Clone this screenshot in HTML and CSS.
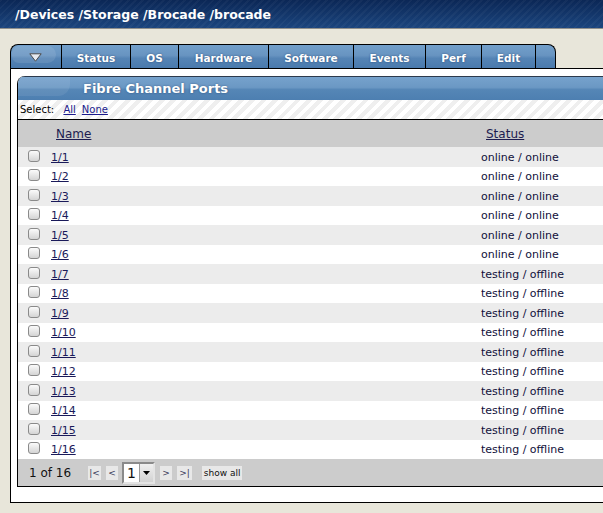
FILE: index.html
```html
<!DOCTYPE html>
<html>
<head>
<meta charset="utf-8">
<link rel="stylesheet" href="styles.css">
</head>
<body>
<div class="topbar"><h1 class="title">/Devices /Storage /Brocade /brocade</h1></div>
<div class="main">
  <div class="tabs">
    <div class="tab tab-menu"><span class="glow"></span><svg class="tri" width="13" height="9" viewBox="0 0 13 9"><polygon points="0.8,0.8 12.2,0.8 6.5,8.2" fill="#e6eaf0" stroke="#4a4a4a" stroke-width="1"/></svg></div>
    <div class="tab w-status">Status</div>
    <div class="tab w-os">OS</div>
    <div class="tab w-hw">Hardware</div>
    <div class="tab w-sw">Software</div>
    <div class="tab w-ev">Events</div>
    <div class="tab w-perf">Perf</div>
    <div class="tab w-edit">Edit</div>
    <div class="tab tab-end"></div>
  </div>
  <div class="panel">
    <div class="box">
      <div class="box-head"><span class="cap"></span><span class="box-title">Fibre Channel Ports</span></div>
      <div class="select-row">Select: <a class="sel-link" href="#">All</a> <a class="sel-link" href="#">None</a></div>
      <div class="thead">
        <div class="c1"></div>
        <div class="c2"><a class="hlink" href="#">Name</a></div>
        <div class="c3"><a class="hlink" href="#">Status</a></div>
      </div>
      <div class="rows">
        <div class="row odd"><div class="c1"><span class="cb"></span></div><div class="c2"><a class="plink" href="#">1/1</a></div><div class="c3">online / online</div></div>
        <div class="row"><div class="c1"><span class="cb"></span></div><div class="c2"><a class="plink" href="#">1/2</a></div><div class="c3">online / online</div></div>
        <div class="row odd"><div class="c1"><span class="cb"></span></div><div class="c2"><a class="plink" href="#">1/3</a></div><div class="c3">online / online</div></div>
        <div class="row"><div class="c1"><span class="cb"></span></div><div class="c2"><a class="plink" href="#">1/4</a></div><div class="c3">online / online</div></div>
        <div class="row odd"><div class="c1"><span class="cb"></span></div><div class="c2"><a class="plink" href="#">1/5</a></div><div class="c3">online / online</div></div>
        <div class="row"><div class="c1"><span class="cb"></span></div><div class="c2"><a class="plink" href="#">1/6</a></div><div class="c3">online / online</div></div>
        <div class="row odd"><div class="c1"><span class="cb"></span></div><div class="c2"><a class="plink" href="#">1/7</a></div><div class="c3">testing / offline</div></div>
        <div class="row"><div class="c1"><span class="cb"></span></div><div class="c2"><a class="plink" href="#">1/8</a></div><div class="c3">testing / offline</div></div>
        <div class="row odd"><div class="c1"><span class="cb"></span></div><div class="c2"><a class="plink" href="#">1/9</a></div><div class="c3">testing / offline</div></div>
        <div class="row"><div class="c1"><span class="cb"></span></div><div class="c2"><a class="plink" href="#">1/10</a></div><div class="c3">testing / offline</div></div>
        <div class="row odd"><div class="c1"><span class="cb"></span></div><div class="c2"><a class="plink" href="#">1/11</a></div><div class="c3">testing / offline</div></div>
        <div class="row"><div class="c1"><span class="cb"></span></div><div class="c2"><a class="plink" href="#">1/12</a></div><div class="c3">testing / offline</div></div>
        <div class="row odd"><div class="c1"><span class="cb"></span></div><div class="c2"><a class="plink" href="#">1/13</a></div><div class="c3">testing / offline</div></div>
        <div class="row"><div class="c1"><span class="cb"></span></div><div class="c2"><a class="plink" href="#">1/14</a></div><div class="c3">testing / offline</div></div>
        <div class="row odd"><div class="c1"><span class="cb"></span></div><div class="c2"><a class="plink" href="#">1/15</a></div><div class="c3">testing / offline</div></div>
        <div class="row"><div class="c1"><span class="cb"></span></div><div class="c2"><a class="plink" href="#">1/16</a></div><div class="c3">testing / offline</div></div>
      </div>
      <div class="pager">
        <span class="count">1 of 16</span>
        <span class="pbtn b-first">|&lt;</span>
        <span class="pbtn b-prev">&lt;</span>
        <span class="psel"><span class="pval">1</span><span class="parr"><svg width="7" height="4" viewBox="0 0 7 4"><polygon points="0,0 7,0 3.5,4" fill="#000"/></svg></span></span>
        <span class="pbtn b-next">&gt;</span>
        <span class="pbtn b-last">&gt;|</span>
        <span class="pbtn b-all">show all</span>
      </div>
    </div>
  </div>
</div>
</body>
</html>
```
FILE: styles.css
```css
html, body {
  margin: 0;
  overflow: hidden;
}
body {
  background: #e8e6da;
  font-family: "DejaVu Sans", Verdana, sans-serif;
  width: 603px;
  height: 513px;
}
.topbar {
  height: 29px;
  box-sizing: border-box;
  background:
    repeating-linear-gradient(135deg, rgba(255,255,255,0.035) 0 2px, rgba(0,0,0,0) 2px 5px),
    linear-gradient(#0b2756, #1b457e);
  border-bottom: 1px solid #8f8f8c;
  display: flex;
  align-items: center;
  padding-left: 15px;
}
.title {
  margin: 0;
  color: #fff;
  font-size: 12.5px;
  font-weight: bold;
  padding-top: 1px;
}
.main {
  padding: 15px 0 0 10px;
}
.tabs {
  display: flex;
  height: 24px;
}
.tab {
  position: relative;
  box-sizing: border-box;
  height: 24px;
  border-top: 1px solid #000;
  border-left: 1px solid #000;
  background: linear-gradient(#729fca 0%, #6894c1 45%, #5584b5 58%, #4a7aad 100%);
  color: #fff;
  font-weight: bold;
  font-size: 10.5px;
  display: flex;
  align-items: center;
  justify-content: center;
  padding-top: 2px;
  text-shadow: 0 0 2px rgba(10, 30, 70, 0.55);
}
.tab-menu { width: 51px; border-top-left-radius: 8px; }
.glow {
  position: absolute;
  left: 1px;
  top: 1px;
  width: 44px;
  height: 17px;
  border-radius: 8px 10px 10px 8px;
  background: rgba(255,255,255,0.10);
}
.tri { position: relative; margin-left: -1px; margin-top: -1px; }
.w-status { width: 69px; }
.w-os { width: 48px; }
.w-hw { width: 90px; }
.w-sw { width: 85px; }
.w-ev { width: 72px; }
.w-perf { width: 56px; }
.w-edit { width: 54px; }
.tab-end {
  width: 21px;
  border-right: 1px solid #000;
  border-top-right-radius: 8px;
}
.panel {
  width: 620px;
  height: 435px;
  box-sizing: border-box;
  border: 1px solid #000;
  background: #fff;
  padding: 7px 0 0 6px;
}
.box {
  border-left: 1px solid #000;
  border-bottom: 1px solid #000;
  border-top-left-radius: 8px;
  overflow: hidden;
}
.box-head {
  position: relative;
  height: 24px;
  box-sizing: border-box;
  border-top: 1px solid #2c3a4c;
  background: linear-gradient(#76a2cc 0%, #6b98c4 45%, #5586b6 55%, #4d7fb1 100%);
  display: flex;
  align-items: center;
  padding-left: 65px;
}
.cap {
  position: absolute;
  left: 0;
  top: 0;
  width: 52px;
  height: 19px;
  border-radius: 7px 0 12px 0;
  background: rgba(255,255,255,0.08);
}
.box-title {
  position: relative;
  color: #fff;
  font-weight: bold;
  font-size: 13px;
  text-shadow: 0 0 2px rgba(10, 30, 70, 0.5);
}
.select-row {
  height: 20px;
  box-sizing: border-box;
  border-bottom: 1px solid #000;
  background: repeating-linear-gradient(135deg, #ffffff 0 4px, #efefef 4px 8px);
  font-size: 10px;
  color: #000;
  display: flex;
  align-items: center;
  padding-left: 2px;
  white-space: pre;
}
.sel-link { color: #1a1a8c; margin-left: 6px; }
.thead {
  height: 27px;
  background: #cccccc;
  display: flex;
  align-items: center;
  font-size: 12px;
}
.c1, .c2, .c3 { box-sizing: border-box; }
.c1 { width: 33px; flex: none; display: flex; align-items: center; padding-left: 10px; }
.c2 { width: 430px; flex: none; }
.c3 { flex: 1; }
.thead .c2, .thead .c3 { padding-left: 5px; }
.thead .c3 { padding-top: 1px; }
.hlink { color: #1c1c50; }
.rows { font-size: 11px; }
.row {
  height: 19.5px;
  display: flex;
  align-items: center;
  background: #fff;
  color: #10103a;
  padding-top: 1px;
  box-sizing: border-box;
}
.row.odd { background: #ececec; }
.cb {
  display: block;
  width: 12px;
  height: 12px;
  box-sizing: border-box;
  border: 1px solid #8a8a8a;
  border-radius: 3px;
  background: linear-gradient(#fbfbfb, #d4d4d4);
  margin-top: -3px;
}
.plink { color: #1a1a5a; }
.pager {
  height: 27px;
  background: #cccccc;
  display: flex;
  align-items: center;
  padding-left: 11px;
}
.count { font-size: 12px; color: #111; margin-right: 17px; }
.pbtn {
  height: 14px;
  box-sizing: border-box;
  background: #e8e8e8;
  font-size: 9px;
  color: #3a3a5a;
  display: flex;
  align-items: center;
  justify-content: center;
}
.b-first { width: 13px; margin-right: 5px; }
.b-prev { width: 12px; margin-right: 4px; }
.b-next { width: 12px; margin-left: 5px; }
.b-last { width: 15px; margin-left: 5px; }
.b-all { width: 40px; margin-left: 10px; color: #111; }
.psel {
  width: 33px;
  height: 22px;
  box-sizing: border-box;
  border: 2px solid;
  border-color: #8a8a8a #e4e4e4 #e4e4e4 #8a8a8a;
  background: #fff;
  display: flex;
  align-items: stretch;
}
.pval {
  flex: 1;
  font-size: 14px;
  color: #111;
  display: flex;
  align-items: center;
  padding-left: 3px;
}
.parr {
  width: 13px;
  background: linear-gradient(#f0f0f0, #d2d2d2);
  border-left: 1px solid #9a9a9a;
  display: flex;
  align-items: center;
  justify-content: center;
}
```
